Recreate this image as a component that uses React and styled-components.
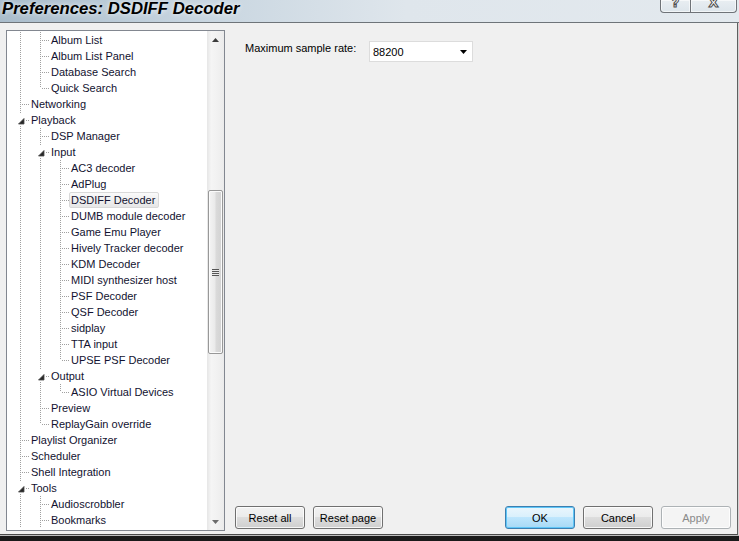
import styled, { createGlobalStyle } from "styled-components";

const GlobalStyle = createGlobalStyle`
  html, body {
    margin: 0;
    padding: 0;
  }
  body {
    width: 739px;
    height: 541px;
    overflow: hidden;
    background: #1c1c1c;
    font-family: "Liberation Sans", Arial, sans-serif;
  }
`;

const Window = styled.div`
  width: 739px;
  height: 541px;
  display: flex;
  flex-direction: column;
  background: #1c1c1c;
`;

const TitleBar = styled.div`
  height: 22px;
  flex: none;
  display: flex;
  justify-content: space-between;
  align-items: flex-start;
  background: linear-gradient(to right, #a9bccb 0%, #c6d4df 25%, #dfe6ec 55%, #e3e9ee 100%);
  border-bottom: 1px solid #6e7479;
  overflow: hidden;
`;

const Title = styled.div`
  font-family: "Liberation Sans", Arial, sans-serif;
  font-weight: bold;
  font-style: italic;
  font-size: 16.7px;
  line-height: 17px;
  padding-left: 2px;
  color: #000;
  text-shadow: 0 0 5px rgba(255, 255, 255, 0.9);
  white-space: nowrap;
`;

const CaptionButtons = styled.div`
  display: flex;
  margin-right: 2px;
`;

const CaptionButton = styled.div`
  width: ${(p) => p.$w}px;
  height: 12px;
  display: flex;
  justify-content: center;
  overflow: hidden;
  border: 1px solid #6f7378;
  border-top: none;
  border-left: ${(p) => (p.$first ? "1px solid #6f7378" : "none")};
  border-radius: ${(p) => (p.$first ? "0 0 0 4px" : "0 0 4px 0")};
  background: linear-gradient(to bottom, #e9eef2, #dde5eb);
  box-shadow: inset 0 0 0 1px rgba(255, 255, 255, 0.6);
`;

const CaptionGlyph = styled.span`
  font-family: "DejaVu Sans", sans-serif;
  font-weight: bold;
  font-size: 13px;
  line-height: 13px;
  margin-top: -4px;
  color: #fff;
  -webkit-text-stroke: 1px #4d4d4d;
`;

const Frame = styled.div`
  flex: 1;
  min-height: 0;
  display: flex;
  background: #f0f0f0;
  border-right: 1px solid #5f5f5f;
  border-bottom: 1px solid #4a4a4a;
  margin-right: 1px;
  box-shadow: 1px 0 0 #d4d4d4;
  padding: 7px 0 3px 6px;
`;

const BottomEdge = styled.div`
  height: 5px;
  flex: none;
  border-top: 1px solid #bdbdbd;
  background: #1a1a1a;
`;

const TreePanel = styled.div`
  width: 217px;
  flex: none;
  display: flex;
  background: #fff;
  border: 1px solid #828790;
`;

const TreeList = styled.div`
  flex: 1;
  overflow: hidden;
  padding: 1px 0 0 4px;
  font-size: 11px;
  color: #121230;
`;

const TreeRow = styled.div`
  display: flex;
  align-items: center;
  height: 16px;
  white-space: nowrap;
`;

const dotsV = "repeating-linear-gradient(to bottom, #a0a0a0 0 1px, transparent 1px 2px)";
const dotsH = "repeating-linear-gradient(to right, #a0a0a0 0 1px, transparent 1px 2px)";

const Guide = styled.span`
  position: relative;
  flex: none;
  width: 20px;
  height: 16px;

  &::before {
    content: "";
    position: absolute;
    left: 9px;
    top: 0;
    width: 1px;
    height: ${(p) => (p.$kind === "ell" ? "8px" : p.$kind === "blank" ? "0" : "16px")};
    background: ${dotsV};
  }

  &::after {
    content: "";
    display: ${(p) => (p.$kind === "line" || p.$kind === "blank" ? "none" : "block")};
    position: absolute;
    left: 11px;
    top: 8px;
    width: 7px;
    height: 1px;
    background: ${dotsH};
  }
`;

const Expander = styled.span`
  position: absolute;
  left: 3px;
  top: 2px;
  width: 12px;
  height: 12px;
  background: #fff;
  z-index: 1;

  svg {
    position: absolute;
    left: 4px;
    top: 4px;
  }
`;

const Label = styled.span`
  margin-left: -2px;
  padding: 0 3px 0 1px;
  height: 14px;
  line-height: 14px;
  border: 1px solid ${(p) => (p.$selected ? "#d9d9d9" : "transparent")};
  border-radius: 2px;
  background: ${(p) => (p.$selected ? "linear-gradient(to bottom, #fafafa, #e6e6e6)" : "transparent")};
`;

const ScrollBar = styled.div`
  width: 17px;
  flex: none;
  display: flex;
  flex-direction: column;
  background: linear-gradient(to right, #e6e6e6, #f5f5f5 25%, #f0f0f0 70%, #ebebeb);
`;

const ScrollArrow = styled.div`
  height: 17px;
  flex: none;
  display: flex;
  align-items: center;
  justify-content: center;
`;

const Track = styled.div`
  flex: 1;
  display: flex;
  flex-direction: column;
`;

const Thumb = styled.div`
  margin: 0 1px;
  border: 1px solid #989898;
  border-radius: 2px;
  background: linear-gradient(to right, #f4f4f4, #eaeaea 45%, #dadada 55%, #d2d2d2);
  box-shadow: inset 0 0 0 1px #fbfbfb;
  display: flex;
  align-items: center;
  justify-content: center;
`;

const Grip = styled.span`
  width: 7px;
  height: 7px;
  background: repeating-linear-gradient(to bottom, #555 0 1px, #e8e8e8 1px 2px);
`;

const RightPane = styled.div`
  flex: 1;
  display: flex;
  flex-direction: column;
  padding: 11px 6px 2px 10px;
`;

const SettingRow = styled.div`
  display: flex;
  align-items: flex-start;
  margin-left: 10px;
`;

const SettingLabel = styled.div`
  width: 124px;
  font-size: 11px;
  line-height: 14px;
  color: #000;
`;

const Combo = styled.div`
  width: 94px;
  height: 19px;
  display: flex;
  align-items: center;
  justify-content: space-between;
  padding: 0 5px 0 3px;
  box-sizing: content-box;
  background: #fff;
  border: 1px solid #dcdcdc;
  font-size: 11px;
  color: #000;
`;

const ButtonBar = styled.div`
  margin-top: auto;
  display: flex;
  justify-content: space-between;
`;

const ButtonGroup = styled.div`
  display: flex;
  gap: 8px;
`;

const Button = styled.button`
  width: 70px;
  height: 23px;
  padding: 0;
  font-family: "Liberation Sans", Arial, sans-serif;
  font-size: 11px;
  color: ${(p) => (p.$variant === "disabled" ? "#8a8a8a" : "#000")};
  border-radius: 3px;
  border: 1px solid
    ${(p) => (p.$variant === "default" ? "#3c7fb1" : p.$variant === "disabled" ? "#adb2b5" : "#707070")};
  background: ${(p) =>
    p.$variant === "default"
      ? "linear-gradient(to bottom, #eaf6fd 0%, #d9f0fc 50%, #bee6fd 50%, #a7d9f5 100%)"
      : p.$variant === "disabled"
      ? "#f4f4f4"
      : "linear-gradient(to bottom, #f2f2f2 0%, #ebebeb 50%, #dddddd 50%, #cfcfcf 100%)"};
  box-shadow: ${(p) =>
    p.$variant === "default" ? "inset 0 0 0 1px #5fc6f7" : "inset 0 0 0 1px rgba(255,255,255,0.8)"};
`;

const rows = [
  { label: "Album List", guides: ["line", "tee"] },
  { label: "Album List Panel", guides: ["line", "tee"] },
  { label: "Database Search", guides: ["line", "tee"] },
  { label: "Quick Search", guides: ["line", "ell"] },
  { label: "Networking", guides: ["tee"] },
  { label: "Playback", guides: ["exp"] },
  { label: "DSP Manager", guides: ["line", "tee"] },
  { label: "Input", guides: ["line", "exp"] },
  { label: "AC3 decoder", guides: ["line", "line", "tee"] },
  { label: "AdPlug", guides: ["line", "line", "tee"] },
  { label: "DSDIFF Decoder", guides: ["line", "line", "tee"], selected: true },
  { label: "DUMB module decoder", guides: ["line", "line", "tee"] },
  { label: "Game Emu Player", guides: ["line", "line", "tee"] },
  { label: "Hively Tracker decoder", guides: ["line", "line", "tee"] },
  { label: "KDM Decoder", guides: ["line", "line", "tee"] },
  { label: "MIDI synthesizer host", guides: ["line", "line", "tee"] },
  { label: "PSF Decoder", guides: ["line", "line", "tee"] },
  { label: "QSF Decoder", guides: ["line", "line", "tee"] },
  { label: "sidplay", guides: ["line", "line", "tee"] },
  { label: "TTA input", guides: ["line", "line", "tee"] },
  { label: "UPSE PSF Decoder", guides: ["line", "line", "ell"] },
  { label: "Output", guides: ["line", "exp"] },
  { label: "ASIO Virtual Devices", guides: ["line", "line", "ell"] },
  { label: "Preview", guides: ["line", "tee"] },
  { label: "ReplayGain override", guides: ["line", "ell"] },
  { label: "Playlist Organizer", guides: ["tee"] },
  { label: "Scheduler", guides: ["tee"] },
  { label: "Shell Integration", guides: ["tee"] },
  { label: "Tools", guides: ["exp"] },
  { label: "Audioscrobbler", guides: ["line", "tee"] },
  { label: "Bookmarks", guides: ["line", "tee"] },
];

function ExpandedGlyph() {
  return (
    <Expander>
      <svg width="7" height="7" viewBox="0 0 7 7">
        <polygon points="6,0.5 6,6 0.5,6" fill="#262626" stroke="#4a4a4a" strokeWidth="0.8" />
      </svg>
    </Expander>
  );
}

function Arrow({ up, color }) {
  return (
    <svg width="7" height="4" viewBox="0 0 7 4">
      <polygon points={up ? "3.5,0 7,4 0,4" : "0,0 7,0 3.5,4"} fill={color} />
    </svg>
  );
}

export default function App() {
  return (
    <Window>
      <GlobalStyle />
      <TitleBar>
        <Title>Preferences: DSDIFF Decoder</Title>
        <CaptionButtons>
          <CaptionButton $w={29} $first>
            <CaptionGlyph>?</CaptionGlyph>
          </CaptionButton>
          <CaptionButton $w={45}>
            <CaptionGlyph>X</CaptionGlyph>
          </CaptionButton>
        </CaptionButtons>
      </TitleBar>
      <Frame>
        <TreePanel>
          <TreeList>
            {rows.map((row) => (
              <TreeRow key={row.label}>
                {row.guides.map((g, i) => (
                  <Guide key={i} $kind={g === "exp" ? "tee" : g}>
                    {g === "exp" && <ExpandedGlyph />}
                  </Guide>
                ))}
                <Label $selected={row.selected}>{row.label}</Label>
              </TreeRow>
            ))}
          </TreeList>
          <ScrollBar>
            <ScrollArrow>
              <Arrow up color="#3c3c3c" />
            </ScrollArrow>
            <Track>
              <Thumb style={{ marginTop: 142, height: 162 }}>
                <Grip />
              </Thumb>
            </Track>
            <ScrollArrow>
              <Arrow color="#6c6c6c" />
            </ScrollArrow>
          </ScrollBar>
        </TreePanel>
        <RightPane>
          <SettingRow>
            <SettingLabel>Maximum sample rate:</SettingLabel>
            <Combo>
              <span>88200</span>
              <Arrow color="#000" />
            </Combo>
          </SettingRow>
          <ButtonBar>
            <ButtonGroup>
              <Button>Reset all</Button>
              <Button>Reset page</Button>
            </ButtonGroup>
            <ButtonGroup>
              <Button $variant="default">OK</Button>
              <Button>Cancel</Button>
              <Button $variant="disabled">Apply</Button>
            </ButtonGroup>
          </ButtonBar>
        </RightPane>
      </Frame>
      <BottomEdge />
    </Window>
  );
}
